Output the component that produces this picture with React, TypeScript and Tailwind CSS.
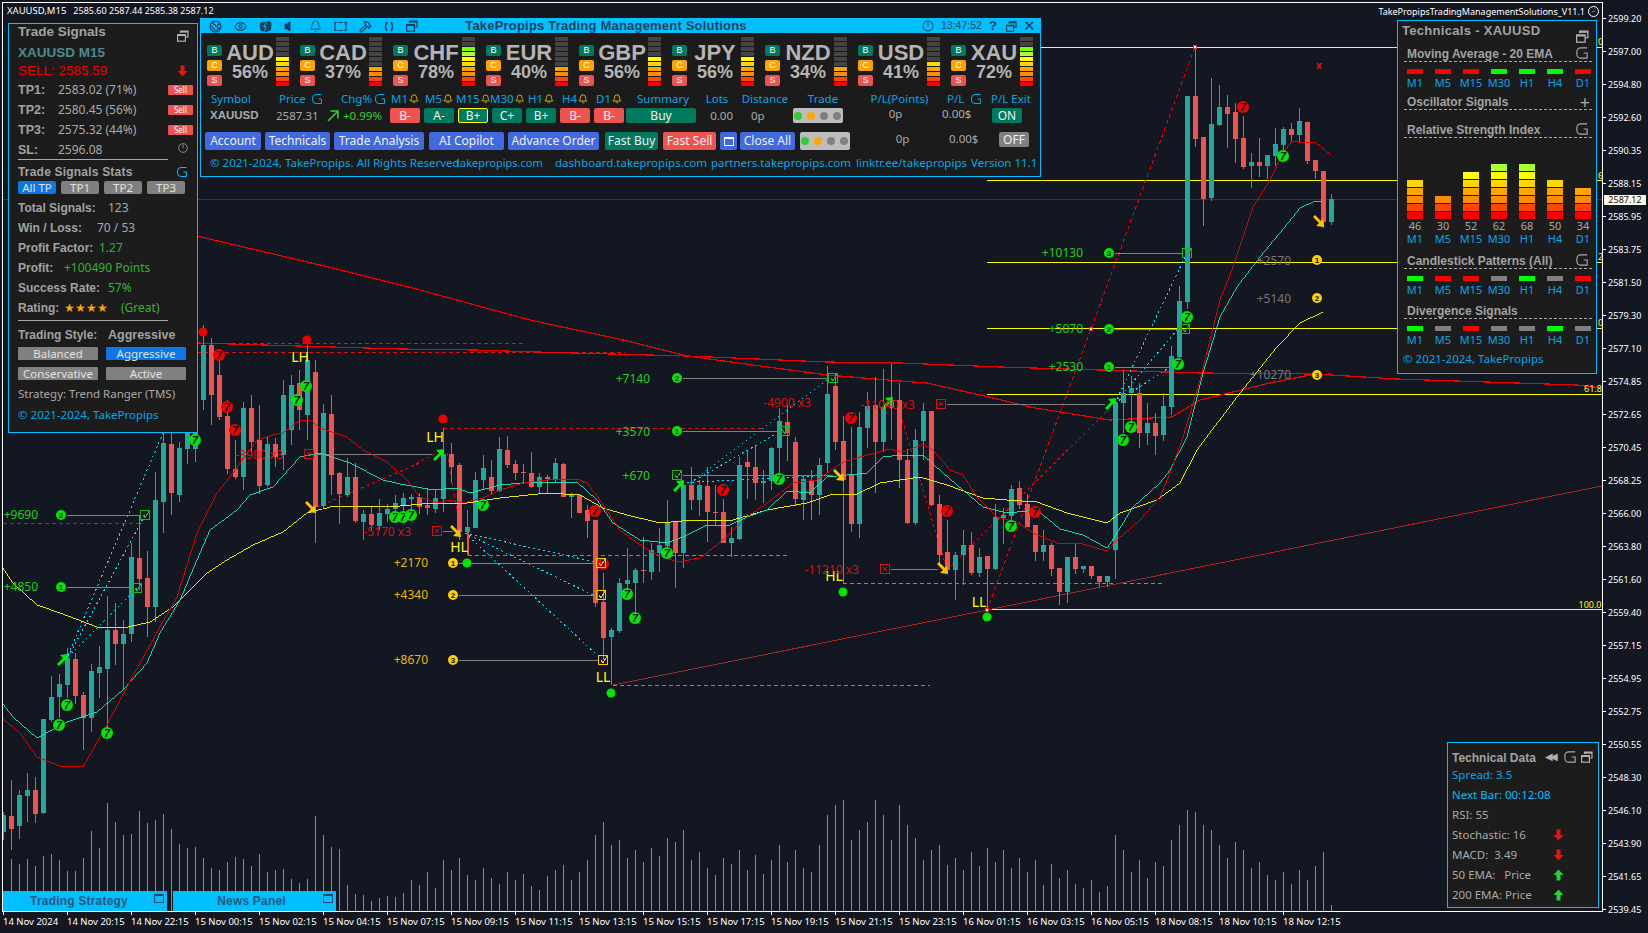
import { Bell, Earth, Eye, Hammer, Volume } from 'lucide-react';

const PRICES = ['2599.20','2597.00','2594.80','2592.60','2590.35','2588.15','2585.95','2583.75','2581.50','2579.30','2577.10','2574.85','2572.65','2570.45','2568.25','2566.00','2563.80','2561.60','2559.40','2557.15','2554.95','2552.75','2550.55','2548.30','2546.10','2543.90','2541.65','2539.45'];
const TIMES = ['14 Nov 2024','14 Nov 20:15','14 Nov 22:15','15 Nov 00:15','15 Nov 02:15','15 Nov 04:15','15 Nov 07:15','15 Nov 09:15','15 Nov 11:15','15 Nov 13:15','15 Nov 15:15','15 Nov 17:15','15 Nov 19:15','15 Nov 21:15','15 Nov 23:15','16 Nov 01:15','16 Nov 03:15','16 Nov 05:15','18 Nov 08:15','18 Nov 10:15','18 Nov 12:15'];

// [teal?, high, bodyTop, bodyBottom, low] in page pixels, one per bar (8px apart)
const CANDLES: number[][] = [
  [1,812,815,832,840],[0,780,816,829,850],[1,790,795,826,839],[1,773,790,796,822],[0,777,790,814,823],[1,719,719,813,814],
  [1,676,697,720,722],[1,674,684,697,718],[1,648,658,685,698],[0,653,659,696,704],[0,692,695,718,750],[1,664,671,718,732],
  [1,646,667,673,698],[1,596,630,669,735],[0,603,630,644,665],[1,620,634,644,689],[1,543,557,634,642],[0,515,558,579,590],
  [0,551,578,607,637],[1,472,500,607,622],[1,432,443,502,533],[0,428,444,493,515],[1,442,448,495,502],[1,395,410,449,464],
  [1,380,400,449,462],[1,325,345,400,410],[0,338,345,395,425],[0,355,375,417,420],[0,400,416,469,474],[0,440,469,477,479],
  [1,402,408,477,490],[0,395,408,442,452],[0,405,440,486,494],[1,437,444,485,487],[0,438,444,457,467],[1,380,395,455,470],
  [1,375,385,430,445],[0,370,383,410,430],[1,345,360,415,440],[0,360,372,507,543],[1,404,413,506,508],[0,395,414,475,495],
  [0,472,473,494,524],[1,458,477,495,497],[0,463,477,521,523],[1,510,514,522,540],[0,506,514,525,530],[1,499,513,526,530],
  [1,504,509,514,522],[1,495,503,509,518],[1,493,498,505,518],[1,494,497,499,512],[0,493,497,507,514],[0,488,505,508,515],
  [1,490,498,509,513],[1,428,454,499,512],[0,443,454,467,483],[0,463,465,532,540],[1,510,527,532,555],[1,472,480,528,528],
  [1,455,468,480,490],[0,460,477,491,494],[1,437,449,491,492],[0,436,450,465,468],[0,460,464,473,480],[0,464,472,473,484],
  [0,452,473,487,488],[1,473,477,487,494],[0,475,477,479,493],[1,458,463,480,482],[0,463,464,497,497],[1,493,495,497,518],
  [0,495,495,513,513],[0,505,510,521,538],[0,520,520,603,607],[0,573,602,638,660],[1,628,630,637,685],[1,578,583,631,633],
  [1,548,580,584,594],[1,568,570,583,612],[0,537,570,571,583],[1,543,550,572,580],[1,528,545,553,572],[1,500,522,546,557],
  [0,522,522,553,588],[1,484,485,553,568],[0,467,485,500,510],[1,480,485,500,516],[0,467,486,512,542],[0,485,512,513,525],
  [0,499,512,543,543],[1,527,538,543,557],[1,457,465,539,540],[0,451,462,467,499],[0,445,467,483,500],[1,470,481,483,503],
  [1,447,448,481,490],[1,408,421,448,473],[0,405,422,433,461],[0,437,442,499,505],[1,475,479,500,520],[0,470,481,495,520],
  [1,458,465,495,515],[1,366,394,463,472],[0,373,386,442,450],[0,416,441,480,583],[0,427,474,524,532],[1,412,427,524,538],
  [1,392,406,428,448],[0,377,405,442,493],[1,369,407,442,452],[1,363,400,408,440],[0,383,400,460,488],[0,449,460,523,524],
  [1,429,440,523,525],[1,403,411,441,460],[0,411,411,505,506],[0,495,504,555,564],[0,520,552,570,574],[1,552,555,570,600],
  [1,530,545,555,585],[0,532,545,573,575],[1,548,557,573,577],[0,556,556,569,610],[1,504,517,569,570],[1,508,515,518,544],
  [1,485,489,516,520],[0,481,488,505,509],[0,494,504,527,527],[0,525,525,552,561],[1,530,545,552,561],[0,543,545,569,576],
  [0,568,568,592,605],[1,557,557,592,603],[0,543,557,569,574],[1,566,566,569,573],[0,566,566,576,579],[0,576,576,582,587],
  [1,576,576,582,587],[1,403,403,550,579],[1,370,393,403,433],[1,376,388,393,425],[0,383,393,433,448],[1,403,423,433,445],
  [0,413,423,436,455],[1,393,406,435,441],[1,346,356,407,415],[1,286,301,357,358],[1,96,96,302,309],[0,47,96,139,147],
  [0,137,137,199,226],[1,78,124,198,201],[1,85,107,125,126],[0,95,107,114,148],[0,103,112,139,163],[0,116,138,167,169],
  [1,153,162,166,188],[0,138,162,166,177],[1,155,155,166,179],[1,128,144,156,166],[1,127,129,145,160],[0,123,129,135,142],
  [1,108,121,135,143],[0,122,122,161,164],[0,160,160,171,179],[0,171,171,222,228],[1,194,199,222,225],
];

const VOLUME = [911,859,864,859,866,856,854,860,871,871,858,831,848,803,822,835,834,811,823,820,814,829,844,848,847,858,868,870,862,857,859,866,854,872,870,869,879,883,879,816,835,847,849,885,894,895,901,898,896,897,
  893,880,885,872,888,860,870,858,875,880,868,878,884,872,880,874,886,890,876,870,865,880,872,860,835,822,845,840,858,850,862,848,856,838,842,830,860,852,868,875,858,864,850,870,855,874,860,845,862,850,868,872,845,815,805,800,840,830,822,800,815,840,805,825,838,860,850,845,865,858,870,852,866,848,862,850,868,858,872,860,885,864,878,870,884,888,880,892,886,835,850,872,860,878,862,866,840,825,810,812,825,830,845,858,842,850,868,862,875,880,872,884,870,880,866,852,905];

const RED_MA = '3,719 20,733 37,757 60,766 83,767 107,725 120,700 140,663 160,627 177,597 197,533 217,493 233,473 257,440 273,435 283,433 300,420 310,420 320,428 347,437 363,450 387,462 407,480 420,497 437,503 450,500 463,503 483,498 500,490 523,483 547,480 577,479 587,483 600,500 620,530 633,540 653,553 677,562 700,558 717,545 730,533 747,517 767,503 793,483 817,480 843,462 867,455 890,449 903,452 923,444 933,450 950,470 963,475 977,497 997,517 1017,522 1033,533 1057,543 1083,544 1107,551 1117,540 1140,520 1160,497 1170,473 1183,437 1200,380 1220,300 1233,267 1253,207 1270,180 1283,153 1292,141 1303,143 1315,142 1331,155';
const TEAL_MA = '3,704 13,717 37,738 67,722 97,712 123,690 147,663 160,633 180,600 197,560 210,530 237,510 250,495 273,487 300,457 320,453 350,463 383,480 400,484 433,490 457,488 470,493 500,485 533,482 577,482 597,500 613,523 640,540 667,543 683,537 707,525 730,525 747,517 767,510 787,491 810,493 827,477 867,473 883,457 900,455 923,455 943,473 963,490 983,507 1007,513 1037,510 1060,529 1083,535 1107,548 1117,533 1133,507 1160,483 1170,470 1187,437 1203,373 1220,317 1237,287 1260,257 1293,217 1300,208 1315,201 1322,202';
const YELLOW_MA = '3,568 13,583 37,605 60,613 97,627 123,628 150,622 173,607 207,573 227,560 253,545 283,532 307,513 330,507 347,506 367,507 400,506 433,503 467,503 500,498 547,493 580,495 603,508 627,515 660,523 693,520 733,520 767,510 807,503 830,495 857,494 880,483 900,480 920,477 947,485 983,498 1007,500 1037,502 1067,513 1107,523 1120,513 1157,500 1180,483 1197,450 1240,393 1277,347 1300,323 1323,312';
const RED_SLOW = '197,236 320,265 420,290 530,320 623,340 687,356 827,375 900,381 927,383 980,395 1035,408 1110,420 1172,417 1200,400 1270,383 1310,375 1330,374';
const RED_FLAT = '197,343 400,349 475,350 537,352 687,356 827,362 900,363 1000,367 1200,373 1315,374 1397,379 1577,385 1602,388';

const GREEN_SEVENS = [[67,705],[59,725],[107,733],[195,440],[395,517],[403,517],[411,515],[483,505],[627,594],[635,618],[667,553],[779,479],[1011,526],[1123,440],[1131,427],[1283,156],[1187,317],[1178,364],[306,386],[297,400]];
const RED_SEVENS = [[595,511],[603,564],[723,490],[851,418],[947,511],[1035,512],[1243,107],[227,407],[235,430],[219,355]];
const UP_ARROWS = [[62,659],[438,454],[678,485],[1110,403],[887,402]];
const DOWN_ARROWS = [[310,508],[455,532],[838,476],[942,569],[1318,222]];
const DOTS = [[203,332,'#f00000'],[307,340,'#f00000'],[443,419,'#f00000'],[467,563,'#00e600'],[611,693,'#00e600'],[843,592,'#00e600'],[987,617,'#00e600']] as [number,number,string][];
const SWINGS = [['LH',300,357],['LH',435,437],['HL',459,547],['LL',603,677],['HL',834,576],['LL',979,602]] as [string,number,number][];

const CURRENCIES = [['AUD','56%',6],['CAD','37%',4],['CHF','78%',8],['EUR','40%',4],['GBP','56%',6],['JPY','56%',6],['NZD','34%',4],['USD','41%',5],['XAU','72%',8]] as [string,string,number][];
const LEVELS = ['#ff0000','#ff4500','#ff8c00','#ffa500','#ffd700','#ffff00','#adff2f','#7fff00','#444444','#444444'];
const TF = ['M1','M5','M15','M30','H1','H4','D1'];
const GRADES = [['B-',0],['A-',1],['B+',2],['C+',1],['B+',1],['B-',0],['B-',0]] as [string,number][];

function Seven({ x, y, c }: { x: number; y: number; c: string }) {
  return (
    <g>
      <circle cx={x} cy={y} r={6} fill={c} shapeRendering="auto" />
      <text x={x} y={y + 4} textAnchor="middle" fontSize="11" fontWeight="700" fontStyle="italic" fill="#111" fontFamily="Liberation Sans, sans-serif">7</text>
    </g>
  );
}

function Num({ x, y, n, c }: { x: number; y: number; n: number; c: string }) {
  return (
    <g>
      <circle cx={x} cy={y} r={5} fill={c} shapeRendering="auto" />
      <text x={x} y={y + 3} textAnchor="middle" fontSize="8" fontWeight="700" fill="#111" fontFamily="Liberation Sans, sans-serif">{n}</text>
    </g>
  );
}

function Check({ x, y, c }: { x: number; y: number; c: string }) {
  return (
    <g fill="none" stroke={c}>
      <rect x={x - 4.5} y={y - 4.5} width={9} height={9} />
      <path d={`M${x - 2} ${y} l2 3 l4 -7`} />
    </g>
  );
}

function Cross({ x, y }: { x: number; y: number }) {
  return (
    <g fill="none" stroke="#d81010">
      <rect x={x - 4.5} y={y - 4.5} width={9} height={9} />
      <path d={`M${x - 2} ${y - 2} l4 4 m0 -4 l-4 4`} />
    </g>
  );
}

function Chart() {
  const sans = 'Noto Sans, sans-serif';
  const yl = (x: number, y: number) => <rect x={x} y={y} width={1602 - x} height={1} fill="#ffff00" />;
  const lead = (x1: number, x2: number, y: number) => <rect x={x1} y={y} width={x2 - x1} height={1} fill="#808080" />;
  const label = (t: string, x: number, y: number, c: string) => (
    <text x={x} y={y + 4} fontSize="12" fill={c} textAnchor="end" fontFamily={sans}>{t}</text>
  );
  return (
    <svg viewBox="3 3 1599 908" className="block w-full h-full" shapeRendering="crispEdges">
      <rect x={3} y={199} width={1599} height={1} fill="#33363d" />
      {yl(1040, 47)}{yl(987, 180)}{yl(987, 262)}{yl(987, 328)}{yl(987, 394)}{yl(987, 609)}
      <polyline points={RED_SLOW} fill="none" stroke="#f00000" strokeWidth="1.2" />
      <polyline points={RED_FLAT} fill="none" stroke="#f00000" strokeWidth="1.2" />
      <path d="M987 610 L987 610 M987 610 L1091 329 L1195 47" stroke="#f00000" strokeDasharray="4 3" fill="none" />
      <path d="M947 570 L1115 403 M897 403 L947 570 M317 507 L420 463 M400 472 L437 453 M447 453 L460 530" stroke="#f00000" strokeDasharray="3 3" fill="none" />
      <path d="M3 523 H143 M197 343 H525 M197 352 H625 M443 428 H765" stroke="#e01010" strokeDasharray="4 3" fill="none" />
      <path d="M468 555 H787 M613 685 H930 M843 583 H1163" stroke="#22cc22" strokeDasharray="4 3" fill="none" />
      <path d="M468 530 V555 M611 660 V685 M843 480 V583" stroke="#ef5350" fill="none" />
      <path d="M68 657 L145 515 M68 657 L137 588 M68 655 L163 433 M465 533 L600 563 M465 533 L593 595 M465 533 L597 655 M690 483 L830 378 M690 483 L783 430 M677 483 L833 475 M1115 403 L1187 253 M1115 403 L1178 329 M1115 403 L1170 367" stroke="#00e5ff" strokeDasharray="2 3" fill="none" />
      <polyline points="613,685 987,610 1602,486" fill="none" stroke="#b02020" />
      {lead(67, 140, 515)}{lead(67, 132, 587)}{lead(459, 596, 563)}{lead(459, 596, 595)}{lead(459, 598, 660)}
      {lead(683, 828, 378)}{lead(683, 780, 431)}{lead(683, 833, 475)}{lead(1115, 1182, 253)}{lead(1115, 1180, 329)}{lead(1115, 1170, 367)}
      {lead(314, 432, 454)}{lead(443, 453, 531)}{lead(947, 1105, 404)}{lead(891, 938, 569)}
      {VOLUME.map((top, i) => <rect key={i} x={3 + 8 * i} y={top} width={1} height={911 - top} fill="#9a9a1e" />)}
      {CANDLES.map(([teal, hi, top, bot, lo], i) => {
        const c = teal ? '#26a69a' : '#ef5350';
        return (
          <g key={i} fill={c}>
            <rect x={3 + 8 * i} y={hi} width={1} height={lo - hi} />
            <rect x={1 + 8 * i} y={top} width={5} height={Math.max(bot - top, 1)} />
          </g>
        );
      })}
      <polyline points={YELLOW_MA} fill="none" stroke="#ffff00" strokeWidth="0.9" />
      <polyline points={TEAL_MA} fill="none" stroke="#1de9b6" strokeWidth="0.9" />
      <polyline points={RED_MA} fill="none" stroke="#f00000" strokeWidth="0.9" />
      {DOTS.map(([x, y, c], i) => <circle key={i} cx={x} cy={y} r={4.5} fill={c} shapeRendering="auto" />)}
      {SWINGS.map(([t, x, y], i) => <text key={i} x={x} y={y + 5} fontSize="14" fill="#ffff00" textAnchor="middle" fontFamily={sans}>{t}</text>)}
      {RED_SEVENS.map(([x, y], i) => <Seven key={i} x={x} y={y} c="#f00000" />)}
      {GREEN_SEVENS.map(([x, y], i) => <Seven key={i} x={x} y={y} c="#00e600" />)}
      {UP_ARROWS.map(([x, y], i) => <path key={i} transform={`translate(${x} ${y})`} d="M-5 5 L1 -1 L-2 -4 L6 -5 L5 3 L3 1 L-3 7 Z" fill="#00f000" shapeRendering="auto" />)}
      {DOWN_ARROWS.map(([x, y], i) => <path key={i} transform={`translate(${x} ${y})`} d="M-5 -5 L1 1 L-2 4 L6 5 L5 -3 L3 -1 L-3 -7 Z" fill="#ffc400" shapeRendering="auto" />)}
      <Check x={145} y={515} c="#18b818" /><Check x={137} y={588} c="#18b818" />
      <Check x={601} y={563} c="#ffc400" /><Check x={601} y={595} c="#ffc400" /><Check x={603} y={660} c="#ffc400" />
      <Check x={833} y={378} c="#18b818" /><Check x={785} y={431} c="#18b818" /><Check x={677} y={475} c="#18b818" />
      <Check x={1187} y={253} c="#18b818" /><Check x={1185} y={329} c="#18b818" />
      <Cross x={309} y={454} /><Cross x={437} y={531} /><Cross x={941} y={404} /><Cross x={885} y={569} />
      <Num x={61} y={515} n={2} c="#00e600" /><Num x={61} y={587} n={1} c="#00e600" />
      <Num x={453} y={563} n={1} c="#ffd000" /><Num x={453} y={595} n={2} c="#ffd000" /><Num x={453} y={660} n={3} c="#ffd000" />
      <Num x={677} y={378} n={2} c="#00e600" /><Num x={677} y={431} n={1} c="#00e600" />
      <Num x={1109} y={253} n={3} c="#00e600" /><Num x={1109} y={329} n={2} c="#00e600" /><Num x={1109} y={367} n={1} c="#00e600" />
      <Num x={1317} y={260} n={1} c="#ffd000" /><Num x={1317} y={298} n={2} c="#ffd000" /><Num x={1317} y={375} n={3} c="#ffd000" />
      {label('+9690', 38, 515, '#1fd01f')}{label('+4850', 38, 587, '#1fd01f')}
      {label('+2170', 428, 563, '#e6b800')}{label('+4340', 428, 595, '#e6b800')}{label('+8670', 428, 660, '#e6b800')}
      {label('+7140', 650, 379, '#1fd01f')}{label('+3570', 650, 432, '#1fd01f')}{label('+670', 650, 476, '#1fd01f')}
      {label('+10130', 1083, 253, '#1fd01f')}{label('+5070', 1083, 329, '#1fd01f')}{label('+2530', 1083, 367, '#1fd01f')}
      {label('+2570', 1291, 261, '#777777')}{label('+5140', 1291, 299, '#777777')}{label('+10270', 1291, 375, '#777777')}
      {label('-5170 x3', 411, 532, '#d81010')}{label('-3980 x3', 283, 455, '#d81010')}{label('-4900 x3', 811, 403, '#d81010')}{label('-11040 x3', 915, 405, '#d81010')}{label('-11210 x3', 859, 570, '#d81010')}
      <g fill="#ffff00" fontSize="9" fontFamily={sans}>
        <text x={1593} y={392} textAnchor="middle">61.8</text>
        <text x={1590} y={608} textAnchor="middle">100.0</text>
        <text x={1598} y={45}>0</text><text x={1598} y={179}>6</text><text x={1598} y={260}>2</text><text x={1598} y={326}>0</text>
      </g>
      <g stroke="#ff2020" fill="#ffffff">
        <rect x={1193} y={45} width={3} height={3} /><rect x={1089} y={327} width={3} height={3} /><rect x={985} y={608} width={3} height={3} />
      </g>
      <text x={1319} y={69} fontSize="10" fill="#e01010" textAnchor="middle" fontWeight="700" fontFamily={sans}>x</text>
    </svg>
  );
}

function GIcon({ c, size = 14 }: { c: string; size?: number }) {
  return (
    <svg width={size} height={size} viewBox="0 0 14 14" fill="none" stroke={c} strokeWidth="1" className="shrink-0">
      <path d="M11.5 2.5 H6 a3.5 3.5 0 0 0 -3.5 3.5 v2 a3.5 3.5 0 0 0 3.5 3.5 h5.5 v-4.5 h-3" />
    </svg>
  );
}

function Restore({ c = '#b0b0b0', size = 12 }: { c?: string; size?: number }) {
  return (
    <svg width={size} height={size} viewBox="0 0 12 12" fill="none" stroke={c} strokeWidth="1.2" className="shrink-0">
      <path d="M3.5 3 V1 H11 V7 H8.5" />
      <path d="M3.5 1.8 H11" strokeWidth="1.6" />
      <rect x="0.6" y="4.6" width="7.8" height="6.6" />
      <path d="M0.6 5.2 H8.4" strokeWidth="1.6" />
    </svg>
  );
}

function Arrow({ up }: { up?: boolean }) {
  return (
    <svg width="11" height="12" viewBox="0 0 11 12" className={up ? '' : 'rotate-180'}>
      <path d="M5.5 0.5 L10.5 6 H7.5 V11.5 H3.5 V6 H0.5 Z" fill={up ? '#2ecc40' : '#f01010'} />
    </svg>
  );
}

function LevelBars({ n }: { n: number }) {
  return (
    <div className="flex flex-col gap-[1px] w-[13px] shrink-0">
      {[9, 8, 7, 6, 5, 4, 3, 2, 1, 0].map((k) => (
        <div key={k} className="h-[4px] w-full" style={{ backgroundColor: k < n ? LEVELS[k] : '#444444' }} />
      ))}
    </div>
  );
}

function Tag({ t, cls }: { t: string; cls: string }) {
  return <div className={`w-[15px] h-[11px] rounded-[2px] flex items-center justify-center text-[9px] text-white ${cls}`}>{t}</div>;
}

function Lights({ h }: { h: string }) {
  return (
    <div className={`w-[50px] bg-[#bdbdbd] rounded-[2px] flex items-center justify-between pl-[1px] pr-[2px] shrink-0 ${h}`}>
      <span className="w-[8px] h-[8px] rounded-full bg-[#32cd32]" />
      <span className="w-[8px] h-[8px] rounded-full bg-[#ffa500]" />
      <span className="w-[8px] h-[8px] rounded-full bg-[#808080]" />
      <span className="w-[8px] h-[8px] rounded-full bg-[#808080]" />
    </div>
  );
}

function Btn({ t, cls }: { t: string; cls: string }) {
  return <div className={`h-[18px] rounded-[2px] flex items-center justify-center text-[12px] text-[#f0f0f0] whitespace-nowrap shrink-0 ${cls}`}>{t}</div>;
}

function MainPanel() {
  return (
    <div className="absolute left-[197px] top-[15px] w-[841px] h-[159px] border border-[#00bfff] bg-[#1b1b1b] flex flex-col">
      <div className="h-[14px] bg-[#00bfff] flex items-center shrink-0 text-[#1a3f5e]">
        <div className="w-[264px] pl-[8px] flex items-center gap-[12px]">
          <Earth size={13} strokeWidth={2} />
          <Eye size={13} strokeWidth={2} />
          <svg width="13" height="13" viewBox="0 0 13 13"><path d="M1 3 L4 2 L11 1 L12.5 4 L12 10 L8 12 L2 11 L0.5 7 Z" fill="#1a3f5e" /><path d="M7.5 2.5 L4.5 6.5 H7 L5.5 10.5" stroke="#00bfff" fill="none" /></svg>
          <Volume size={13} fill="#1a3f5e" strokeWidth={2} />
          <Bell size={13} strokeWidth={1.6} />
          <svg width="13" height="13" viewBox="0 0 13 13" fill="none" stroke="#1a3f5e" strokeWidth="1.2"><path d="M3 2.5 H1 V10.5 H3 M10 2.5 H12 V10.5 H10 M4.5 2.5 H8.5 M4.5 10.5 H8.5" /></svg>
          <Hammer size={13} strokeWidth={2.2} />
          <svg width="10" height="13" viewBox="0 0 10 13" fill="none" stroke="#1a3f5e" strokeWidth="1.6"><path d="M3 2 Q0 6.5 3 11 M7 2 Q10 6.5 7 11" /></svg>
          <Restore c="#1a3f5e" />
        </div>
        <div className="w-[282px] text-center text-[13px] font-bold font-['Liberation_Sans',sans-serif] tracking-[0.2px] whitespace-nowrap leading-[14px]">TakePropips Trading Management Solutions</div>
        <div className="flex-1 flex items-center justify-end pr-[3px] text-[10.5px] font-['Liberation_Sans',sans-serif]">
          <svg width="12" height="12" viewBox="0 0 12 12" fill="none" stroke="#1a3f5e" className="mr-[7px]"><circle cx="6" cy="6" r="5" /><path d="M6 2.5 V6.5" /></svg>
          <span className="w-[42px]">13:47:52</span>
          <span className="w-[20px] mr-[3px] text-center text-[13px] font-bold">?</span>
          <span className="w-[15px]"><Restore c="#1a3f5e" size={11} /></span>
          <span className="w-[16px] text-center text-[15px] leading-[14px]">✕</span>
        </div>
      </div>

      <div className="flex pl-[6px] pt-[4px] h-[54px] shrink-0 font-['Liberation_Sans',sans-serif]">
        {CURRENCIES.map(([name, pct, n]) => (
          <div key={name} className="w-[93px] flex shrink-0">
            <div className="flex flex-col gap-[4px] pt-[8px] w-[15px] shrink-0">
              <Tag t="B" cls="bg-[#007a5e]" />
              <Tag t="C" cls="bg-[#ffa500]" />
              <Tag t="S" cls="bg-[#ef5350]" />
            </div>
            <div className="w-[54px] flex flex-col items-center text-[#b4b4b4] font-bold pt-[5px] pl-[2px]">
              <div className="text-[22px] leading-[22px]">{name}</div>
              <div className="text-[18px] leading-[19px] -mt-[1px]">{pct}</div>
            </div>
            <LevelBars n={n} />
          </div>
        ))}
      </div>

      <div className="flex items-center h-[14px] mt-[5px] shrink-0 text-[11.5px] text-[#00a8e8] whitespace-nowrap">
        <div className="w-[78px] pl-[10px] shrink-0">Symbol</div>
        <div className="w-[62px] flex items-center gap-[4px] shrink-0">Price<GIcon c="#00a8e8" /></div>
        <div className="w-[47px] flex items-center gap-[1px] shrink-0">Chg%<GIcon c="#00a8e8" /></div>
        {TF.map((t) => (
          <div key={t} className="w-[34px] flex items-center justify-center gap-[1px] shrink-0">{t}<Bell size={10} color="#ffd700" /></div>
        ))}
        <div className="w-[74px] text-center shrink-0">Summary</div>
        <div className="w-[34px] text-center shrink-0">Lots</div>
        <div className="w-[62px] text-center shrink-0">Distance</div>
        <div className="w-[54px] text-center shrink-0">Trade</div>
        <div className="w-[97px] text-center pl-[2px] shrink-0">P/L(Points)</div>
        <div className="w-[44px] flex items-center gap-[5px] shrink-0">P/L<GIcon c="#00a8e8" /></div>
        <div className="w-[40px] shrink-0">P/L Exit</div>
      </div>

      <div className="flex items-center h-[15px] mt-[2px] shrink-0 text-[11.5px] text-[#aaaaaa] whitespace-nowrap">
        <div className="w-[75px] pl-[9px] font-bold text-[11.5px] font-['Liberation_Sans',sans-serif] shrink-0">XAUUSD</div>
        <div className="w-[53px] shrink-0">2587.31</div>
        <div className="w-[59px] flex items-center text-[#32cd32] shrink-0">
          <svg width="13" height="12" viewBox="0 0 13 12" fill="none" stroke="#32cd32" strokeWidth="1.6" className="mr-[3px] -ml-[2px]"><path d="M1 11 L11 1 M3.5 1 H11 V8.5" /></svg>
          +0.99%
        </div>
        <div className="flex gap-[4px] w-[238px] pl-[2px] shrink-0">
          {GRADES.map(([g, k], i) => (
            <div key={i} className={`w-[30px] h-[15px] rounded-[2px] flex items-center justify-center text-[#f0f0f0] text-[12px] shrink-0 ${k === 0 ? 'bg-[#ef5350]' : 'bg-[#007a5e]'} ${k === 2 ? 'border border-[#ffff00]' : ''}`}>{g}</div>
          ))}
        </div>
        <div className="w-[70px] h-[15px] rounded-[2px] bg-[#007a5e] flex items-center justify-center text-[#f0f0f0] text-[12px] shrink-0">Buy</div>
        <div className="w-[37px] text-right shrink-0">0.00</div>
        <div className="w-[60px] pl-[18px] shrink-0">0p</div>
        <Lights h="h-[15px]" />
        <div className="w-[97px] text-center pl-[8px] -mt-[3px] shrink-0">0p</div>
        <div className="w-[52px] -mt-[3px] pl-[2px] shrink-0">0.00$</div>
        <div className="w-[30px] h-[15px] rounded-[2px] bg-[#007a5e] flex items-center justify-center text-[#f0f0f0] text-[12px] shrink-0">ON</div>
      </div>

      <div className="flex items-start h-[18px] mt-[9px] pl-[4px] shrink-0 text-[11.5px] text-[#aaaaaa] whitespace-nowrap">
        <Btn t="Account" cls="w-[56px] mr-[4px] bg-[#4169e1]" />
        <Btn t="Technicals" cls="w-[65px] mr-[4px] bg-[#4169e1]" />
        <Btn t="Trade Analysis" cls="w-[90px] mr-[5px] bg-[#4169e1]" />
        <Btn t="AI Copilot" cls="w-[75px] mr-[4px] bg-[#4169e1]" />
        <Btn t="Advance Order" cls="w-[91px] mr-[6px] bg-[#4169e1]" />
        <Btn t="Fast Buy" cls="w-[53px] mr-[5px] bg-[#007a5e]" />
        <Btn t="Fast Sell" cls="w-[53px] mr-[4px] bg-[#ef5350]" />
        <div className="w-[17px] h-[18px] mr-[3px] rounded-[2px] bg-[#4169e1] flex items-center justify-center shrink-0">
          <div className="w-[10px] h-[9px] border border-white border-t-2" />
        </div>
        <Btn t="Close All" cls="w-[55px] mr-[5px] bg-[#4169e1]" />
        <Lights h="h-[18px]" />
        <div className="w-[97px] text-center pl-[8px] -mt-[2px] shrink-0">0p</div>
        <div className="w-[52px] pl-[2px] -mt-[2px] shrink-0">0.00$</div>
        <div className="w-[30px] h-[15px] rounded-[2px] bg-[#808080] flex items-center justify-center text-[#f0f0f0] text-[12px] shrink-0">OFF</div>
      </div>

      <div className="flex items-center h-[14px] mt-[6px] pl-[9px] shrink-0 text-[11.5px] text-[#00a8e8] whitespace-nowrap">
        <div className="w-[246px] shrink-0">© 2021-2024, TakePropips. All Rights Reserved</div>
        <div className="w-[99px] text-[11px] shrink-0">takepropips.com</div>
        <div className="w-[156px] shrink-0">dashboard.takepropips.com</div>
        <div className="w-[145px] shrink-0">partners.takepropips.com</div>
        <div className="w-[115px] shrink-0">linktr.ee/takepropips</div>
        <div className="shrink-0">Version 11.1</div>
      </div>
    </div>
  );
}

const ARIAL_BOLD = "font-['Liberation_Sans',sans-serif] font-bold text-[#a2a2a2]";

function SignalRow({ name, value }: { name: string; value: string }) {
  return (
    <div className="flex items-center h-[20px]">
      <span className={`w-[40px] text-[12.5px] ${ARIAL_BOLD}`}>{name}</span>
      <span className="w-[110px] text-[12px] text-[#a9a9a9]">{value}</span>
      {name !== 'SL:' && <span className="w-[25px] h-[10px] rounded-[1px] bg-[#ef5350] text-white text-[8px] leading-[10px] text-center">Sell</span>}
    </div>
  );
}

function Stat({ name, children, w }: { name: string; children: React.ReactNode; w: string }) {
  return (
    <div className="flex items-center h-[20px] whitespace-nowrap">
      <span className={`text-[12px] ${ARIAL_BOLD} ${w}`}>{name}</span>
      {children}
    </div>
  );
}

function SignalsPanel() {
  return (
    <div className="absolute left-[5px] top-[20px] w-[190px] h-[410px] border border-[#00bfff] bg-[#1c1c1c] pl-[9px] pr-[3px] flex flex-col whitespace-nowrap">
      <div className="flex items-center justify-between h-[16px] pr-[5px]">
        <span className={`text-[13.5px] ${ARIAL_BOLD}`}>Trade Signals</span>
        <span className="mt-[8px]"><Restore /></span>
      </div>
      <div className="h-[20px] mt-[3px] flex items-center text-[13.5px] font-['Liberation_Sans',sans-serif] font-bold text-[#4f8a8b]">XAUUSD M15</div>
      <div className="h-[16px] flex items-center justify-between pr-[6px] text-[13.5px] text-[#f00000] font-['Liberation_Sans',sans-serif]">
        <span>SELL: 2585.59</span>
        <Arrow />
      </div>
      <div className="mt-[1px]">
        <SignalRow name="TP1:" value="2583.02 (71%)" />
        <SignalRow name="TP2:" value="2580.45 (56%)" />
        <SignalRow name="TP3:" value="2575.32 (44%)" />
        <SignalRow name="SL:" value="2596.08" />
      </div>
      <div className="relative h-[1px] w-[150px] bg-[#a9a9a9] mt-[-1px]">
        <span className="absolute left-[160px] -top-[16px]">
          <svg width="10" height="10" viewBox="0 0 10 10" fill="none" stroke="#8a8a8a"><circle cx="5" cy="5" r="4.4" /><path d="M5 1.5 V5.5" /></svg>
        </span>
      </div>
      <div className="flex items-center justify-between h-[20px] mt-[2px] pr-[5px]">
        <span className={`text-[12px] tracking-[0.2px] ${ARIAL_BOLD}`}>Trade Signals Stats</span>
        <GIcon c="#00bfff" />
      </div>
      <div className="flex gap-[5px] h-[13px] -mt-[1px] text-[11.5px] text-[#e0e0e0]">
        <span className="w-[38px] rounded-[2px] bg-[#0a78e6] text-center leading-[13px]">All TP</span>
        <span className="w-[38px] rounded-[2px] bg-[#808080] text-center leading-[13px]">TP1</span>
        <span className="w-[38px] rounded-[2px] bg-[#808080] text-center leading-[13px]">TP2</span>
        <span className="w-[38px] rounded-[2px] bg-[#808080] text-center leading-[13px]">TP3</span>
      </div>
      <div className="mt-[4px] text-[12px]">
        <Stat name="Total Signals:" w="w-[90px]"><span className="text-[#a9a9a9]">123</span></Stat>
        <Stat name="Win / Loss:" w="w-[79px]"><span className="text-[#a9a9a9]">70 / 53</span></Stat>
        <Stat name="Profit Factor:" w="w-[81px]"><span className="text-[#32b432]">1.27</span></Stat>
        <Stat name="Profit:" w="w-[46px]"><span className="text-[#32b432]">+100490 Points</span></Stat>
        <Stat name="Success Rate:" w="w-[90px]"><span className="text-[#32b432]">57%</span></Stat>
        <Stat name="Rating:" w="w-[46px]">
          <span className="text-[#ffa500] text-[12px] w-[57px]">★★★★</span>
          <span className="text-[#32b432]">(Great)</span>
        </Stat>
      </div>
      <div className="h-[1px] w-[150px] bg-[#a9a9a9] mt-[2px]" />
      <div className={`flex items-center h-[20px] mt-[4px] text-[12px] ${ARIAL_BOLD}`}>
        <span className="w-[90px]">Trading Style:</span>
        <span className="text-[12.5px]">Aggressive</span>
      </div>
      <div className="grid grid-cols-[80px_80px] gap-x-[8px] gap-y-[7px] mt-[2px] text-[11.5px] text-center text-[#e0e0e0] leading-[13px]">
        <span className="bg-[#808080] rounded-[1px]">Balanced</span>
        <span className="bg-[#0a78e6] rounded-[1px]">Aggressive</span>
        <span className="bg-[#808080] rounded-[1px]">Conservative</span>
        <span className="bg-[#808080] rounded-[1px]">Active</span>
      </div>
      <div className="h-[20px] mt-[4px] flex items-center text-[11.5px] text-[#a9a9a9]">Strategy: Trend Ranger (TMS)</div>
      <div className="h-[20px] mt-[1px] flex items-center text-[11.5px] text-[#00a8e8]">© 2021-2024, TakePropips</div>
    </div>
  );
}

function TfSignals({ colors }: { colors: string[] }) {
  return (
    <div className="mt-[7px] ml-[3px] grid grid-cols-7 w-[196px]">
      {colors.map((c, i) => (
        <div key={i} className="flex flex-col items-center">
          <div className="w-[16px] h-[5px]" style={{ backgroundColor: c }} />
          <div className="h-[14px] mt-[2px] text-[11px] leading-[14px] text-[#00a8e8]">{TF[i]}</div>
        </div>
      ))}
    </div>
  );
}

function TechHead({ title, icon }: { title: string; icon?: React.ReactNode }) {
  return (
    <div className="ml-[6px] w-[188px] h-[19px] pl-[3px] pr-[2px] flex items-end justify-between border-b border-dashed border-[#a9a9a9]">
      <span className={`text-[12px] leading-[14px] ${ARIAL_BOLD}`}>{title}</span>
      {icon}
    </div>
  );
}

const RSI = [['46', 5], ['30', 3], ['52', 6], ['62', 7], ['68', 7], ['50', 5], ['34', 4]] as [string, number][];
const R = '#ff0000';
const G = '#00ff00';
const N = '#808080';

function TechnicalsPanel() {
  const g = <GIcon c="#a9a9a9" size={16} />;
  return (
    <div className="absolute left-[1394px] top-[17px] w-[200px] h-[354px] border border-[#00bfff] bg-[#1c1c1c] whitespace-nowrap">
      <div className="relative h-[20px] pl-[4px] flex items-center">
        <span className={`text-[13px] tracking-[0.3px] ${ARIAL_BOLD}`}>Technicals - XAUUSD</span>
        <span className="absolute right-[7px] top-[9px]"><Restore size={13} /></span>
      </div>
      <div className="mt-[2px]"><TechHead title="Moving Average - 20 EMA" icon={g} /></div>
      <TfSignals colors={[R, R, R, G, G, G, R]} />
      <div className="mt-[1px]"><TechHead title="Oscillator Signals" icon={<span className="text-[#a9a9a9] text-[18px] leading-[14px]">+</span>} /></div>
      <div className="mt-[9px]"><TechHead title="Relative Strength Index" icon={g} /></div>
      <div className="ml-[3px] grid grid-cols-7 w-[196px] h-[81px] items-end">
        {RSI.map(([v, n]) => (
          <div key={v} className="flex flex-col-reverse items-center gap-[1px]">
            {LEVELS.slice(0, n).map((c, i) => <div key={i} className="w-[16px] h-[7px]" style={{ backgroundColor: c }} />)}
          </div>
        ))}
      </div>
      <div className="ml-[3px] grid grid-cols-7 w-[196px] text-center">
        {RSI.map(([v], i) => (
          <div key={i}>
            <div className="h-[13px] text-[11px] leading-[13px] text-[#a9a9a9]">{v}</div>
            <div className="h-[13px] text-[11px] leading-[13px] text-[#00a8e8]">{TF[i]}</div>
          </div>
        ))}
      </div>
      <div className="mt-[5px]"><TechHead title="Candlestick Patterns (All)" icon={g} /></div>
      <TfSignals colors={[G, R, R, N, G, N, R]} />
      <div className="mt-[3px]"><TechHead title="Divergence Signals" /></div>
      <TfSignals colors={[G, N, R, N, N, G, N]} />
      <div className="h-[14px] mt-[5px] pl-[5px] text-[11.5px] leading-[14px] text-[#00a8e8]">© 2021-2024, TakePropips</div>
    </div>
  );
}

function DataRow({ t, arrow, cls = 'text-[#a9a9a9]' }: { t: string; arrow?: 'up' | 'down'; cls?: string }) {
  return (
    <div className={`h-[20px] flex items-center text-[11.5px] ${cls}`}>
      <span className="w-[101px] whitespace-pre">{t}</span>
      {arrow && <Arrow up={arrow === 'up'} />}
    </div>
  );
}

function TechDataPanel() {
  return (
    <div className="absolute left-[1444px] top-[739px] w-[152px] h-[166px] border border-[#00bfff] bg-[#1c1c1c] pl-[4px] pt-[5px] whitespace-nowrap">
      <div className="h-[17px] flex items-center">
        <span className={`text-[12px] w-[93px] mt-[2px] ${ARIAL_BOLD}`}>Technical Data</span>
        <span className="text-[#b0b0b0] text-[10px] w-[17px] tracking-[-3px]">◀◀</span>
        <span className="w-[19px]"><GIcon c="#a9a9a9" size={16} /></span>
        <Restore />
      </div>
      <DataRow t="Spread: 3.5" cls="text-[#00a8e8]" />
      <DataRow t="Next Bar: 00:12:08" cls="text-[#00bfff]" />
      <DataRow t="RSI: 55" />
      <DataRow t="Stochastic: 16" arrow="down" />
      <DataRow t="MACD:  3.49" arrow="down" />
      <DataRow t="50 EMA:   Price" arrow="up" />
      <DataRow t="200 EMA: Price" arrow="up" />
    </div>
  );
}

function Tab({ t, w }: { t: string; w: string }) {
  return (
    <div className={`relative h-[20px] bg-[#00bfff] flex items-center justify-center text-[12px] tracking-[0.2px] text-[#24587c] font-['Liberation_Sans',sans-serif] font-bold ${w}`}>
      {t}
      <span className="absolute right-[3px] top-[3px] w-[10px] h-[9px] border border-[#1f4666] border-t-2" />
    </div>
  );
}

export default function App() {
  return (
    <div className="w-[1648px] h-[933px] overflow-hidden bg-[#131722] text-white font-['Noto_Sans',sans-serif] flex flex-col">
      <div className="flex ml-[2px] mt-[2px] h-[910px] shrink-0">
        <div className="relative w-[1601px] h-[910px] border border-white shrink-0">
          <Chart />
          <div className="absolute left-[4px] top-[2px] text-[9px] leading-[12px] whitespace-pre"><span className="text-[9.5px]">XAUUSD,M15</span>   2585.60 2587.44 2585.38 2587.12</div>
          <div className="absolute right-[17px] top-[3px] text-[9px] leading-[12px] whitespace-nowrap">TakePropipsTradingManagementSolutions_V11.1</div>
          <div className="absolute right-[3px] top-[3px] w-[11px] h-[11px] rounded-full border border-white text-[7px] leading-[9px] text-center">ᵕ</div>
          <SignalsPanel />
          <MainPanel />
          <TechnicalsPanel />
          <TechDataPanel />
          <div className="absolute left-0 bottom-0 flex gap-[6px]">
            <Tab t="Trading Strategy" w="w-[164px] pr-[12px]" />
            <Tab t="News Panel" w="w-[163px] pr-[6px]" />
          </div>
        </div>
        <div className="relative flex-1 flex flex-col">
          {PRICES.map((p) => (
            <div key={p} className="h-[33px] shrink-0 flex items-center text-[9px] text-white">
              <span className="w-[3px] h-[1px] bg-white mr-[2px]" />
              {p}
            </div>
          ))}
          <div className="absolute left-[1px] top-[193px] w-[42px] h-[10px] bg-[#fdf8e4] text-[#111] text-[9px] leading-[10px] text-center">2587.12</div>
        </div>
      </div>
      <div className="flex pl-[3px] h-[21px] text-[9.5px] text-white whitespace-nowrap">
        {TIMES.map((t) => (
          <div key={t} className="relative w-[64px] shrink-0 pt-[3px] leading-[14px]">
            <span className="absolute left-0 top-0 w-[1px] h-[3px] bg-white" />
            {t}
          </div>
        ))}
      </div>
    </div>
  );
}
